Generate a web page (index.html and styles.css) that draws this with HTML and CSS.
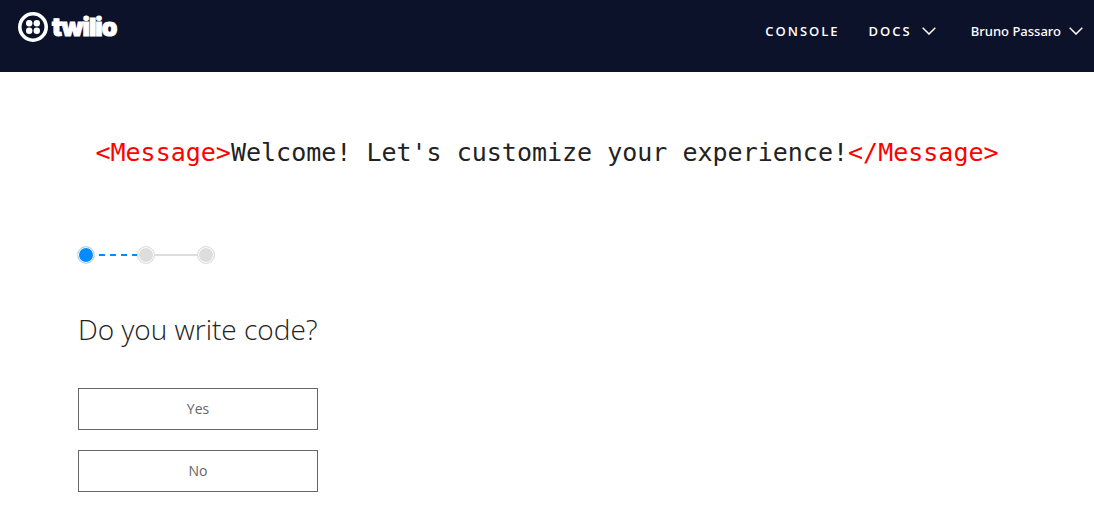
FILE: index.html
```html
<!DOCTYPE html>
<html lang="en">
<head>
<meta charset="utf-8">
<meta name="viewport" content="width=device-width, initial-scale=1">
<title>Twilio</title>
<link rel="stylesheet" href="styles.css">
</head>
<body>
<header class="topbar">
  <a class="logo" href="#">
    <svg class="logo-mark" viewBox="0 0 30 30" aria-hidden="true">
      <circle cx="15" cy="15" r="13.2" fill="none" stroke="#fff" stroke-width="3.6"/>
      <g fill="#fff"><circle cx="11.2" cy="11.2" r="3.2"/><circle cx="18.8" cy="11.2" r="3.2"/><circle cx="11.2" cy="18.8" r="3.2"/><circle cx="18.8" cy="18.8" r="3.2"/></g>
    </svg>
    <span class="logo-word">twilio</span>
  </a>
  <nav class="nav">
    <a class="nav-link" href="#">CONSOLE</a>
    <button class="nav-link" type="button">DOCS
      <svg class="chevron" viewBox="0 0 14 8" aria-hidden="true"><path d="M.7.7 7 7 13.3.7"/></svg>
    </button>
    <button class="nav-user" type="button">Bruno Passaro
      <svg class="chevron" viewBox="0 0 14 8" aria-hidden="true"><path d="M.7.7 7 7 13.3.7"/></svg>
    </button>
  </nav>
</header>
<main class="content">
  <h1 class="welcome"><span class="tag">&lt;Message&gt;</span>Welcome! Let's customize your experience!<span class="tag">&lt;/Message&gt;</span></h1>
  <section class="survey">
    <div class="steps" aria-label="Step 1 of 3">
      <span class="dot dot-current"></span>
      <span class="line line-dashed"></span>
      <span class="dot"></span>
      <span class="line"></span>
      <span class="dot"></span>
    </div>
    <h2 class="question">Do you write code?</h2>
    <div class="answers">
      <button class="answer" type="button">Yes</button>
      <button class="answer" type="button">No</button>
    </div>
  </section>
</main>
</body>
</html>
```

FILE: styles.css
```css
* { box-sizing: border-box; }

body {
  margin: 0;
  background: #fff;
  color: #222;
  font-family: "Open Sans", "Noto Sans", sans-serif;
}

button {
  padding: 0;
  border: 0;
  background: none;
  font-family: inherit;
  cursor: pointer;
}

.topbar {
  display: flex;
  justify-content: space-between;
  align-items: flex-start;
  padding: 12px 11px 0 18px;
  height: 72px;
  background: #0d122b;
  color: #fff;
}

.logo {
  display: flex;
  align-items: center;
  gap: 4px;
  color: #fff;
  text-decoration: none;
}

.logo-mark { width: 30px; height: 30px; }

.logo-word {
  font: 900 25px/30px Inter, sans-serif;
  letter-spacing: -1px;
  -webkit-text-stroke: 1px #fff;
}

.nav {
  display: flex;
  align-items: center;
  padding-top: 9px;
}

.nav-link, .nav-user {
  display: flex;
  align-items: center;
  color: #fff;
  font-size: 13px;
  line-height: 20px;
  text-decoration: none;
}

.nav-link {
  gap: 10px;
  margin-right: 29px;
  font-family: "Open Sans", sans-serif;
  font-weight: 600;
  letter-spacing: 2px;
}

.nav-link + .nav-link { margin-right: 35px; }

.nav-user {
  gap: 8px;
  font-family: "Noto Sans", sans-serif;
  font-weight: 500;
}

.chevron {
  width: 14px;
  height: 8px;
  fill: none;
  stroke: #fff;
  stroke-width: 1.5;
}

.content { padding: 60px 78px 26px; }

.welcome {
  margin: 0 -78px;
  padding-top: 1px;
  color: #222;
  font: 400 25px/40px "DejaVu Sans Mono", monospace;
  text-align: center;
}

.tag { color: #f00; }

.survey { margin-top: 73px; }

.steps {
  display: flex;
  align-items: center;
}

.dot {
  width: 18px;
  height: 18px;
  margin: 0 -1px;
  border: 1px solid #ddd;
  border-radius: 50%;
  background: #ddd;
  box-shadow: inset 0 0 0 1px #fff;
}

.dot-current { background: #008cff; }

.line {
  width: 44px;
  height: 2px;
  background: #ddd;
}

.line-dashed {
  background: repeating-linear-gradient(90deg, transparent 0 5px, #008cff 5px 11px);
}

.question {
  margin: 45px 0 0;
  font-family: "Open Sans", sans-serif;
  font-size: 28px;
  font-weight: 300;
  line-height: 40px;
}

.answers {
  display: grid;
  gap: 20px;
  width: 240px;
  margin-top: 39px;
}

.answer {
  height: 42px;
  padding-bottom: 2px;
  border: 1px solid #666;
  background: #fff;
  color: #666;
  font-size: 14px;
}
```
